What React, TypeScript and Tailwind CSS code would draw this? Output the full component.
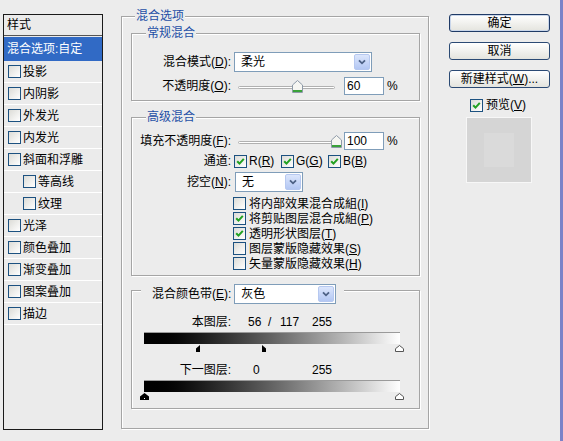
import React from "react";

const font = "font-['Liberation_Sans','Noto_Sans_CJK_SC',sans-serif]";

function Check({ on }: { on?: boolean }) {
  return (
    <span className="flex h-[13px] w-[13px] shrink-0 items-center justify-center border border-[#1c5180] bg-linear-to-br from-[#dcdcd7] to-white">
      {on && (
        <svg width="9" height="9" viewBox="0 0 9 9">
          <path d="M1.2 4.2 L3.5 6.6 L7.8 1.8" stroke="#21a121" strokeWidth="2" fill="none" />
        </svg>
      )}
    </span>
  );
}

function Select({ value, className }: { value: string; className: string }) {
  return (
    <div className={`flex h-[20px] shrink-0 items-center border border-[#7f9db9] bg-white pl-[6px] pr-[1px] ${className}`}>
      <span>{value}</span>
      <span className="ml-auto flex h-[16px] w-[16px] items-center justify-center rounded-[2px] border border-[#b6c8f0] bg-linear-to-b from-[#dce6fc] to-[#b3c7f3]">
        <svg width="8" height="6" viewBox="0 0 8 6">
          <path d="M1 1.3 L4 4.3 L7 1.3" stroke="#4d6185" strokeWidth="1.8" fill="none" />
        </svg>
      </span>
    </div>
  );
}

function Slider({ pos }: { pos: number }) {
  return (
    <div className="relative h-[13px] w-[97px]">
      <div className="absolute left-0 right-0 top-[6px] h-[3px] rounded-full border border-[#b0b0b0] bg-white" />
      <svg className="absolute top-0" style={{ left: pos - 5 }} width="11" height="13" viewBox="0 0 11 13">
        <path d="M0.5 12.5V5L5.5 0.5L10.5 5V12.5Z" fill="#f6f6f2" stroke="#8e9aa8" />
        <path d="M1 10h9v2H1z" fill="#3aa23a" />
      </svg>
    </div>
  );
}

function Input({ value }: { value: string }) {
  return (
    <div className="flex h-[18px] w-[40px] items-center border border-[#7f9db9] bg-white pl-[2px]">{value}</div>
  );
}

function Group({
  title,
  className,
  titleClass,
  children,
}: {
  title: React.ReactNode;
  className: string;
  titleClass: string;
  children?: React.ReactNode;
}) {
  return (
    <div className={`relative border border-[#a5a5a5] shadow-[1px_1px_0_#fff,inset_1px_1px_0_#fff] ${className}`}>
      <div className={`absolute whitespace-nowrap bg-[#ececec] leading-[16px] text-[#1d4fa6] ${titleClass}`}>{title}</div>
      {children}
    </div>
  );
}

function Label({ children }: { children: React.ReactNode }) {
  return <span className="w-[99px] shrink-0 whitespace-nowrap text-right">{children}</span>;
}

const styles: [string, boolean][] = [
  ["投影", false],
  ["内阴影", false],
  ["外发光", false],
  ["内发光", false],
  ["斜面和浮雕", false],
  ["等高线", true],
  ["纹理", true],
  ["光泽", false],
  ["颜色叠加", false],
  ["渐变叠加", false],
  ["图案叠加", false],
  ["描边", false],
];

function Marker({ kind, x }: { kind: "l" | "r" | "b" | "w"; x: number }) {
  if (kind === "l")
    return (
      <svg className="absolute top-0" style={{ left: x - 4 }} width="4" height="7" viewBox="0 0 4 7">
        <path d="M4 0 L0 3.5 V7 H4 Z" fill="#000" />
      </svg>
    );
  if (kind === "r")
    return (
      <svg className="absolute top-0" style={{ left: x + 1 }} width="4" height="7" viewBox="0 0 4 7">
        <path d="M0 0 L4 3.5 V7 H0 Z" fill="#000" />
      </svg>
    );
  if (kind === "b")
    return (
      <svg className="absolute top-0" style={{ left: x - 4 }} width="9" height="7" viewBox="0 0 9 7">
        <path d="M4.5 0 L9 3.5 V7 H0 V3.5 Z" fill="#000" />
        <path d="M4 5h1v1h-1z" fill="#fff" />
      </svg>
    );
  return (
    <svg className="absolute top-0" style={{ left: x - 4 }} width="9" height="7" viewBox="0 0 9 7">
      <path d="M4.5 0.5 L8.5 3.7 V6.5 H0.5 V3.7 Z" fill="#fff" stroke="#555" />
    </svg>
  );
}

export default function App() {
  return (
    <div className={`flex h-[441px] w-[563px] overflow-hidden bg-[#ececec] text-[12px] leading-[14px] text-black ${font}`}>
      {/* style list */}
      <div className="ml-[3px] mt-[14px] flex h-[416px] w-[100px] shrink-0 flex-col border border-[#1a1a1a] bg-[#ebebeb]">
        <div className="flex h-[21px] items-center border-b border-[#555] pl-[3px]">样式</div>
        <div className="mt-[1px] flex h-[24px] items-center bg-[#316ac5] pl-[3px] text-white">混合选项:自定</div>
        {styles.map(([name, sub]) => (
          <div
            key={name}
            className={`flex h-[22px] items-center gap-[2px] border-b border-white ${sub ? "pl-[19px]" : "pl-[4px]"}`}
          >
            <Check />
            <span>{name}</span>
          </div>
        ))}
      </div>

      {/* options */}
      <Group
        title="混合选项"
        titleClass="left-[13px] top-[-9px] px-[1px]"
        className="ml-[18px] mt-[16px] h-[413px] w-[308px] shrink-0 pl-[9px] pr-[8px] pt-[16px]"
      >
        <Group title="常规混合" titleClass="left-[14px] top-[-9px] px-[1px]" className="h-[68px]">
          <div className="mt-[18px] flex h-[20px] items-center">
            <Label>
              混合模式(<u>D</u>):
            </Label>
            <Select value="柔光" className="ml-[3px] w-[138px]" />
          </div>
          <div className="mt-[5px] flex h-[18px] items-center">
            <Label>
              不透明度(<u>O</u>):
            </Label>
            <div className="ml-[7px]">
              <Slider pos={59} />
            </div>
            <div className="ml-[9px]">
              <Input value="60" />
            </div>
            <span className="ml-[3px]">%</span>
          </div>
        </Group>

        <Group title="高级混合" titleClass="left-[14px] top-[-9px] px-[1px]" className="mt-[16px] h-[159px]">
          <div className="mt-[14px] flex h-[18px] items-center">
            <Label>
              填充不透明度(<u>F</u>):
            </Label>
            <div className="ml-[7px]">
              <Slider pos={98} />
            </div>
            <div className="ml-[9px]">
              <Input value="100" />
            </div>
            <span className="ml-[3px]">%</span>
          </div>
          <div className="mt-[4px] flex h-[14px] items-center">
            <Label>通道:</Label>
            <div className="ml-[3px] flex">
              {[
                ["R", "R"],
                ["G", "G"],
                ["B", "B"],
              ].map(([a, b]) => (
                <div key={a} className="flex w-[47px] items-center gap-[2px]">
                  <Check on />
                  <span>
                    {a}(<u>{b}</u>)
                  </span>
                </div>
              ))}
            </div>
          </div>
          <div className="mt-[4px] flex h-[20px] items-center">
            <Label>
              挖空(<u>N</u>):
            </Label>
            <Select value="无" className="ml-[4px] w-[68px]" />
          </div>
          <div className="ml-[101px] mt-[4px] flex flex-col">
            {[
              ["将内部效果混合成組(", "I", ")", false],
              ["将剪贴图层混合成組(", "P", ")", true],
              ["透明形状图层(", "T", ")", true],
              ["图层蒙版隐藏效果(", "S", ")", false],
              ["矢量蒙版隐藏效果(", "H", ")", false],
            ].map(([a, k, c, on]) => (
              <div key={a as string} className="flex h-[15px] items-center gap-[3px]">
                <Check on={on as boolean} />
                <span>
                  {a}
                  <u>{k}</u>
                  {c}
                </span>
              </div>
            ))}
          </div>
        </Group>

        <Group
          title={
            <div className="flex h-[20px] items-center pl-[11px] pr-[8px] text-black">
              <span className="whitespace-nowrap">
                混合颜色带(<u>E</u>):
              </span>
              <Select value="灰色" className="ml-[3px] w-[102px]" />
            </div>
          }
          titleClass="left-[9px] top-[-7px]"
          className="mt-[14px] h-[119px]"
        >
          <div className="mt-[24px] flex h-[14px] items-center">
            <Label>本图层:</Label>
            <span className="ml-[17px] w-[20px]">56</span>
            <span className="w-[12px]">/</span>
            <span className="w-[32px]">117</span>
            <span>255</span>
          </div>
          <div className="ml-[12px] mt-[3px] h-[12px] w-[256px] border-t border-[#9a9a9a] bg-linear-to-r from-black to-white" />
          <div className="relative ml-[12px] mt-[1px] h-[8px] w-[256px]">
            <Marker kind="l" x={56} />
            <Marker kind="r" x={117} />
            <Marker kind="w" x={255} />
          </div>
          <div className="mt-[10px] flex h-[14px] items-center">
            <Label>下一图层:</Label>
            <span className="ml-[22px] w-[59px]">0</span>
            <span>255</span>
          </div>
          <div className="ml-[12px] mt-[3px] h-[12px] w-[256px] border-t border-[#9a9a9a] bg-linear-to-r from-black to-white" />
          <div className="relative ml-[12px] mt-[1px] h-[8px] w-[256px]">
            <Marker kind="b" x={0} />
            <Marker kind="w" x={255} />
          </div>
        </Group>
      </Group>

      {/* buttons */}
      <div className="ml-[20px] mt-[14px] flex w-[101px] shrink-0 flex-col">
        <button className="h-[18px] rounded-[3px] border border-[#1f3a66] bg-linear-to-b from-white to-[#e4e4de] shadow-[inset_0_0_0_1px_#c9d6ea]">
          确定
        </button>
        <button className="mt-[10px] h-[18px] rounded-[3px] border border-[#2b4a74] bg-linear-to-b from-white to-[#e4e4de]">
          取消
        </button>
        <button className="mt-[10px] h-[18px] rounded-[3px] border border-[#2b4a74] bg-linear-to-b from-white to-[#e4e4de]">
          新建样式(<u>W</u>)...
        </button>
        <div className="mt-[10px] flex h-[14px] items-center gap-[3px] pl-[21px]">
          <Check on />
          <span>
            预览(<u>V</u>)
          </span>
        </div>
        <div className="ml-[17px] mt-[5px] flex h-[66px] w-[66px] items-center justify-center border border-[#f7f7f7] bg-[#d5d5d5]">
          <div className="h-[34px] w-[30px] bg-[#dadada]" />
        </div>
      </div>

      <div className="ml-[10px] h-full w-[3px] shrink-0 bg-[#7b82c8]" />
    </div>
  );
}
